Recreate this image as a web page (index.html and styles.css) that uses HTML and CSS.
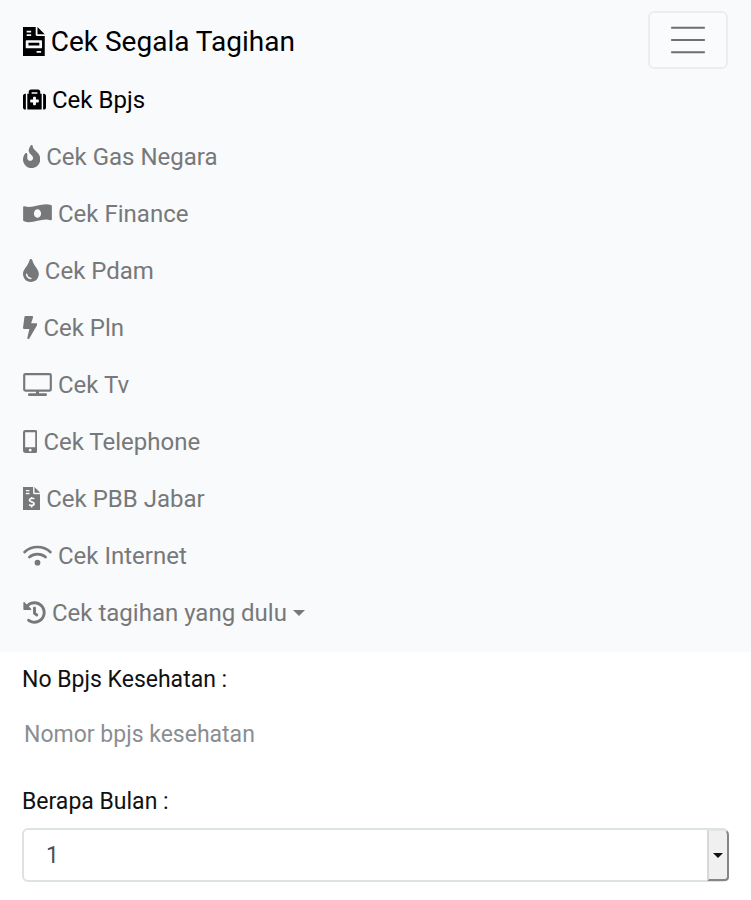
FILE: index.html
```html
<!DOCTYPE html>
<html lang="id">
<head>
<meta charset="utf-8">
<meta name="viewport" content="width=device-width, initial-scale=1">
<title>Cek Segala Tagihan</title>
<link rel="stylesheet" href="styles.css">
</head>
<body>
<header class="navbar">
  <div class="bar">
    <a class="brand" href="#"><svg class="icon" viewBox="0 0 384 512" aria-hidden="true"><path fill-rule="evenodd" d="M0 0H224V136Q224 160 248 160H384V512H0ZM64 64V96H144V64ZM64 128V160H144V128ZM48 248V360Q48 376 64 376H320Q336 376 336 360V248Q336 232 320 232H64Q48 232 48 248ZM96 280H288V328H96ZM240 424V456H320V424ZM256 0V128H384Z"/></svg><span>Cek Segala Tagihan</span></a>
    <button class="toggler" type="button" aria-label="Menu"><svg viewBox="0 0 30 30" aria-hidden="true"><path d="M4 7h22M4 15h22M4 23h22"/></svg></button>
  </div>
  <nav>
    <ul class="menu">
      <li><a class="link active" href="#"><svg class="icon" viewBox="0 0 512 512" aria-hidden="true"><path d="M96 480h320V128h-32V80c0-26.51-21.49-48-48-48H176c-26.51 0-48 21.49-48 48v48H96v352zm96-384h128v32H192V96zm320 80v256c0 26.51-21.49 48-48 48h-16V128h16c26.51 0 48 21.49 48 48zM64 480H48c-26.51 0-48-21.49-48-48V176c0-26.51 21.49-48 48-48h16v352zm288-208v32c0 8.84-7.16 16-16 16h-48v48c0 8.84-7.16 16-16 16h-32c-8.84 0-16-7.16-16-16v-48h-48c-8.84 0-16-7.16-16-16v-32c0-8.84 7.16-16 16-16h48v-48c0-8.84 7.16-16 16-16h32c8.84 0 16 7.16 16 16v48h48c8.84 0 16 7.16 16 16z"/></svg><span>Cek Bpjs</span></a></li>
      <li><a class="link" href="#"><svg class="icon" viewBox="0 0 384 512" aria-hidden="true"><path d="M216 24c0-24-31-33-44-13C48 192 224 200 224 288c0 36-29 64-65 64-35 0-63-29-63-65v-85c0-22-26-32-41-17C28 213 0 261 0 320c0 106 86 192 192 192s192-86 192-192c0-170-168-193-168-296z"/></svg><span>Cek Gas Negara</span></a></li>
      <li><a class="link" href="#"><svg class="icon wide" viewBox="0 0 640 512" aria-hidden="true"><path d="M621 69C585 53 549 48 512 48 384 48 256 109 128 109c-32 0-65-4-97-13-3-1-6-1-8-1C11 95 0 104 0 117v283c0 13 7 25 19 30 36 17 72 22 109 22 128 0 256-61 384-61 32 0 65 4 97 13 3 1 6 1 8 1 12 0 23-9 23-22V99c0-13-7-25-19-30zM320 352c-44 0-80-43-80-96s36-96 80-96 80 43 80 96-36 96-80 96z"/></svg><span>Cek Finance</span></a></li>
      <li><a class="link" href="#"><svg class="icon" viewBox="0 0 352 512" aria-hidden="true"><path d="M206 22c-8-29-50-30-59 0C100 180 0 223 0 334c0 98 78 178 176 178s176-80 176-178C352 222 252 180 206 22zM176 448c-62 0-112-50-112-112 0-9 7-16 16-16s16 7 16 16c0 44 36 80 80 80 9 0 16 7 16 16s-7 16-16 16z"/></svg><span>Cek Pdam</span></a></li>
      <li><a class="link" href="#"><svg class="icon" viewBox="0 0 320 512" aria-hidden="true"><path d="M296 160H181l42-129c4-15-8-31-23-31H56C44 0 34 9 32 21L0 261c-2 14 9 27 24 27h118L97 482c-4 15 8 30 23 30 8 0 16-4 21-12l176-304c9-16-2-36-21-36z"/></svg><span>Cek Pln</span></a></li>
      <li><a class="link" href="#"><svg class="icon wide" viewBox="0 0 640 512" aria-hidden="true"><path fill-rule="evenodd" d="M48 0H592Q640 0 640 48V368Q640 416 592 416H354V448H512Q528 448 528 464V496Q528 512 512 512H128Q112 512 112 496V464Q112 448 128 448H286V416H48Q0 416 0 368V48Q0 0 48 0ZM48 48V368H592V48Z"/></svg><span>Cek Tv</span></a></li>
      <li><a class="link" href="#"><svg class="icon" viewBox="0 0 320 512" aria-hidden="true"><path fill-rule="evenodd" d="M48 0H272Q320 0 320 48V464Q320 512 272 512H48Q0 512 0 464V48Q0 0 48 0ZM48 48V384H272V48ZM160 416A32 32 0 1 0 160 480A32 32 0 1 0 160 416Z"/></svg><span>Cek Telephone</span></a></li>
      <li><a class="link" href="#"><svg class="icon" viewBox="0 0 384 512" aria-hidden="true"><path fill-rule="evenodd" d="M0 0H224V136Q224 160 248 160H384V512H0ZM64 64V96H144V64ZM64 128V160H144V128ZM256 0V128H384Z"/><path class="cutout" d="M252 264c-20-18-100-24-108 24-7 50 104 36 104 84 0 48-84 46-112 20M192 220v42m0 150v42"/></svg><span>Cek PBB Jabar</span></a></li>
      <li><a class="link" href="#"><svg class="icon wide" viewBox="0 0 640 512" aria-hidden="true"><path class="wave" d="M34 178C190 30 450 30 606 178M142 290c102-88 254-88 356 0"/><circle cx="320" cy="416" r="64"/></svg><span>Cek Internet</span></a></li>
      <li><a class="link" href="#"><svg class="icon" viewBox="0 0 512 512" aria-hidden="true"><path d="M504 255c0 137-111 249-248 249-59 0-114-21-156-56-11-9-12-26-2-36l11-11c9-9 23-10 33-2 31 25 71 40 114 40 101 0 183-82 183-184S357 72 255 72c-49 0-93 19-126 50l51 51c10 10 3 27-11 27H24c-9 0-16-7-16-16V39C8 25 25 18 35 28l49 49C129 34 189 8 256 8c137 0 248 111 248 247zM324 337l10-13c8-10 6-25-4-33l-42-33V152c0-13-11-24-24-24h-16c-13 0-24 11-24 24v137l66 52c11 8 26 6 34-4z"/></svg><span>Cek tagihan yang dulu</span><span class="caret"></span></a></li>
    </ul>
  </nav>
</header>
<main>
  <form class="form">
    <label for="nomor">No Bpjs Kesehatan :</label>
    <input class="field plain" id="nomor" type="text" placeholder="Nomor bpjs kesehatan">
    <label for="bulan">Berapa Bulan :</label>
    <div class="select-wrap">
      <select class="field" id="bulan"><option>1</option><option>2</option><option>3</option></select>
      <span class="arrow" aria-hidden="true"></span>
    </div>
  </form>
</main>
</body>
</html>
```
FILE: styles.css
```css
* { box-sizing: border-box; }
body {
  margin: 0;
  background: #fff;
  color: #111;
  font: 23px/34px Roboto, "Liberation Sans", sans-serif;
}
.navbar { background: #f8fafc; padding: 11px 23px; }
.bar { display: flex; justify-content: space-between; align-items: center; }
.brand {
  display: flex;
  align-items: center;
  gap: 6px;
  padding-top: 3px;
  color: #000;
  font-size: 28px;
  text-decoration: none;
}
.icon { height: 23px; flex: none; fill: currentColor; }
.brand .icon { height: 29px; }
.icon.wide { width: 29px; }
.toggler {
  display: flex;
  align-items: center;
  justify-content: center;
  width: 80px;
  height: 58px;
  padding: 0;
  border: 2px solid #ebedee;
  border-radius: 6px;
  background: #fafbfc;
}
.toggler svg { width: 46px; height: 46px; fill: none; stroke: #6f6f6f; stroke-width: 1.4; }
.menu { list-style: none; margin: 0; padding: 2px 0 0; }
.link {
  display: flex;
  align-items: center;
  gap: 6px;
  height: 57px;
  color: #777879;
  font-size: 24px;
  text-decoration: none;
}
.link.active { color: #000; }
.cutout { fill: none; stroke: #f8fafc; stroke-width: 38; }
.wave { fill: none; stroke: currentColor; stroke-width: 60; stroke-linecap: round; }
.caret {
  border: 6px solid transparent;
  border-top-color: currentColor;
  border-bottom: 0;
}
.form { display: flex; flex-direction: column; padding: 11px 22px; }
.field {
  width: 100%;
  height: 54px;
  border: 2px solid #dde2e5;
  border-radius: 6px;
  background: #fff;
  color: #495057;
  font: inherit;
  padding: 0 22px;
  appearance: none;
}
.field.plain { border: 0; padding: 0 2px; margin: 10px 0 24px; }
.field::placeholder { color: #8b8e91; opacity: 1; }
.select-wrap { position: relative; margin-top: 9px; }
.select-wrap .field { display: block; padding-top: 2px; }
.arrow {
  position: absolute;
  top: 1px;
  right: 0;
  bottom: 1px;
  display: flex;
  align-items: center;
  justify-content: center;
  width: 22px;
  border: 2px solid;
  border-color: #e3e3e3 #858585 #858585 #d8d8d8;
  border-radius: 0 6px 4px 0;
  background: #f0f0f0;
  pointer-events: none;
}
.arrow::before {
  content: "";
  border: 5px solid transparent;
  border-top-color: #111;
  border-bottom: 0;
}
```
